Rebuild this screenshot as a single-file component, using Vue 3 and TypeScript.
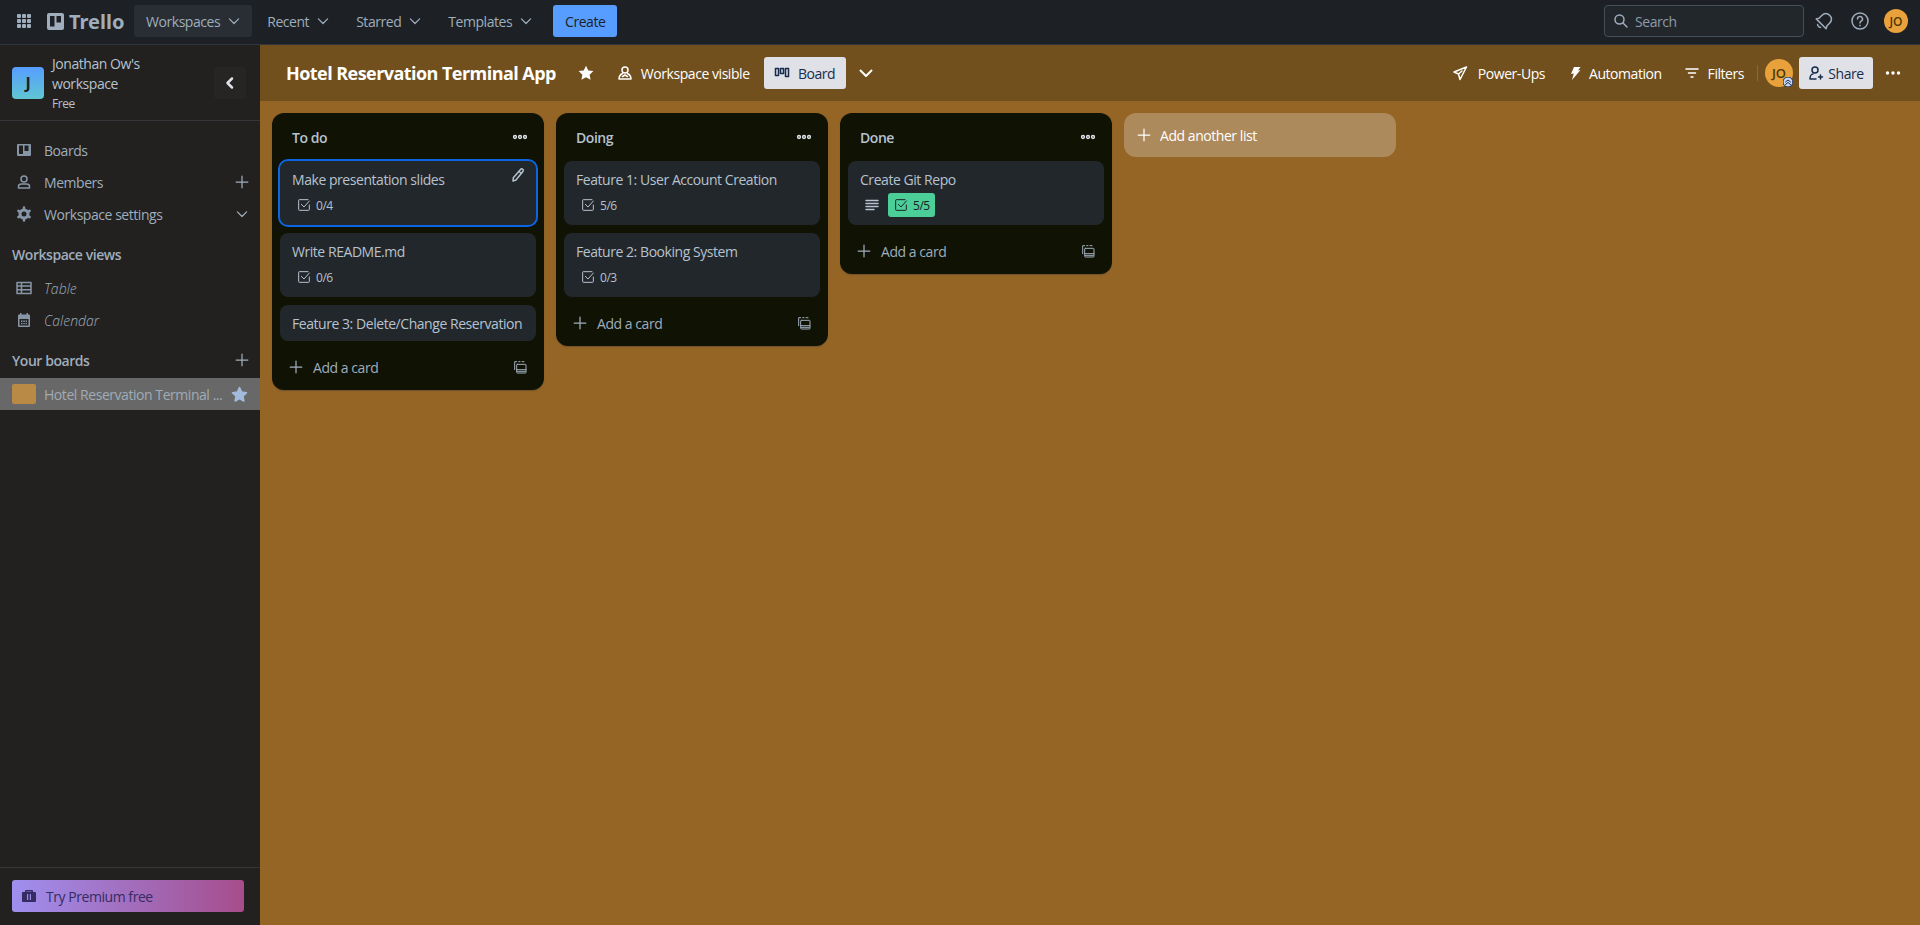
<script setup lang="ts">
const icons: Record<string, string> = {
  chevron: 'M6.5 9.5 12 15l5.5-5.5',
  plus: 'M12 5v14M5 12h14',
  check: 'M20 12v7a1 1 0 0 1-1 1H5a1 1 0 0 1-1-1V5a1 1 0 0 1 1-1h13M8 11l4 4 8-9',
  copy: 'M8 8h12a1 1 0 0 1 1 1v11a1 1 0 0 1-1 1H8a1 1 0 0 1-1-1V9a1 1 0 0 1 1-1ZM7 16h14M8 18.500h12M4 16V4h3M10 4h2M15 4h3',
}

type Card = { title: string; done?: string; desc?: boolean; complete?: boolean; focus?: boolean }
const lists: { name: string; cards: Card[] }[] = [
  {
    name: 'To do',
    cards: [
      { title: 'Make presentation slides', done: '0/4', focus: true },
      { title: 'Write README.md', done: '0/6' },
      { title: 'Feature 3: Delete/Change Reservation' },
    ],
  },
  {
    name: 'Doing',
    cards: [
      { title: 'Feature 1: User Account Creation', done: '5/6' },
      { title: 'Feature 2: Booking System', done: '0/3' },
    ],
  },
  {
    name: 'Done',
    cards: [{ title: 'Create Git Repo', done: '5/5', desc: true, complete: true }],
  },
]
const menus = ['Recent', 'Starred', 'Templates']
</script>

<template>
  <div class="app">
    <header class="topbar">
      <svg class="apps" width="16" height="16" viewBox="0 0 16 16" fill="currentColor">
        <template v-for="y in [1, 6, 11]" :key="y">
          <rect v-for="x in [1, 6, 11]" :key="x" :x="x" :y="y" width="4" height="4" rx="1" />
        </template>
      </svg>
      <div class="logo">
        <svg width="17" height="17" viewBox="0 0 17 17">
          <path fill="currentColor" fill-rule="evenodd" d="M2 0h13a2 2 0 0 1 2 2v13a2 2 0 0 1-2 2H2a2 2 0 0 1-2-2V2a2 2 0 0 1 2-2Zm1 3v10.500h4.500V3Zm6.500 0v6.500H14V3Z" />
        </svg>
        <span>Trello</span>
      </div>
      <button class="menu active">
        Workspaces
        <svg width="20" height="20" viewBox="0 0 24 24"><path :d="icons.chevron" /></svg>
      </button>
      <button v-for="m in menus" :key="m" class="menu">
        {{ m }}
        <svg width="20" height="20" viewBox="0 0 24 24"><path :d="icons.chevron" /></svg>
      </button>
      <button class="create">Create</button>
      <div class="spacer" />
      <div class="search">
        <svg width="16" height="16" viewBox="0 0 16 16"><circle cx="6.500" cy="6.500" r="4.500" /><path d="m10 10 4 4" /></svg>
        <span>Search</span>
      </div>
      <svg class="top-icon bell" width="24" height="24" viewBox="0 0 24 24">
        <g transform="rotate(45 12 12)">
          <path d="M12 4c-3.500 0-5.500 2.500-5.500 6v3.500L5 16h14l-1.500-2.500V10c0-3.500-2-6-5.500-6ZM10 19c.5 1 3.500 1 4 0" />
        </g>
      </svg>
      <svg class="top-icon" width="24" height="24" viewBox="0 0 24 24">
        <circle cx="12" cy="12" r="8" />
        <path d="M9.500 10a2.500 2.500 0 1 1 3.600 2.200c-.8.400-1.100.9-1.100 1.800M12 16.200v.6" />
      </svg>
      <span class="avatar small">JO</span>
    </header>

    <div class="body">
      <aside class="sidebar">
        <div class="ws-head">
          <span class="ws-logo">J</span>
          <div class="ws-name">
            <div>Jonathan Ow's</div>
            <div>workspace</div>
            <div class="free">Free</div>
          </div>
          <button class="collapse">
            <svg width="16" height="16" viewBox="0 0 16 16"><path d="M10 3.500 5.500 8l4.500 4.500" /></svg>
          </button>
        </div>

        <nav class="side-nav">
          <div class="side-row">
            <svg class="side-icon" viewBox="0 0 16 16">
              <path class="fill" fill-rule="evenodd" d="M2 2h12a1 1 0 0 1 1 1v10a1 1 0 0 1-1 1H2a1 1 0 0 1-1-1V3a1 1 0 0 1 1-1Zm1 1.500V12h4V3.500Zm5.500 0V9h4V3.500Z" />
            </svg>
            <span>Boards</span>
          </div>
          <div class="side-row">
            <svg class="side-icon" viewBox="0 0 16 16">
              <circle cx="8" cy="5" r="3" /><path d="M2.500 14v-1.500c0-1.500 1.500-2.500 3-2.500h5c1.500 0 3 1 3 2.500V14Z" />
            </svg>
            <span>Members</span>
            <svg class="row-end" width="20" height="20" viewBox="0 0 24 24"><path :d="icons.plus" /></svg>
          </div>
          <div class="side-row">
            <svg class="side-icon" viewBox="0 0 16 16">
              <circle cx="8" cy="8" r="4" stroke-width="3" />
              <path stroke-width="2.500" d="M8 1.500v2M8 12.500v2M2.400 4.800l1.700 1M11.900 10.200l1.700 1M2.400 11.200l1.700-1M11.900 5.800l1.700-1" />
            </svg>
            <span>Workspace settings</span>
            <svg class="row-end" width="20" height="20" viewBox="0 0 24 24"><path :d="icons.chevron" /></svg>
          </div>
        </nav>

        <div class="side-title views">Workspace views</div>
        <div class="side-row italic first">
          <svg class="side-icon" viewBox="0 0 16 16">
            <path d="M1 2.500h14v11H1ZM1 6h14M1 9.800h14M5.500 2.500v11" />
          </svg>
          <span>Table</span>
        </div>
        <div class="side-row italic">
          <svg class="side-icon" viewBox="0 0 16 16">
            <path class="fill" fill-rule="evenodd" d="M4 1h1.500v1.500h5V1H12v1.500h1a1 1 0 0 1 1 1V14a1 1 0 0 1-1 1H3a1 1 0 0 1-1-1V3.500a1 1 0 0 1 1-1h1Zm-.5 6v6.500h9V7Zm1.500 1.500h1.500V10H5Zm2.300 0h1.500V10H7.300Zm2.300 0H11V10H9.600ZM5 11h1.500v1.300H5Zm2.300 0h1.500v1.300H7.300Zm2.300 0H11v1.300H9.600Z" />
          </svg>
          <span>Calendar</span>
        </div>

        <div class="side-title boards">
          <span>Your boards</span>
          <svg width="20" height="20" viewBox="0 0 24 24"><path :d="icons.plus" /></svg>
        </div>
        <div class="board-row">
          <span class="thumb" />
          <span class="board-name">Hotel Reservation Terminal ...</span>
          <svg class="star" width="17" height="17" viewBox="0 0 16 16">
            <path d="m8 1.500 2 4.200 4.600.6-3.400 3.200.9 4.600L8 11.800 3.900 14.100l.9-4.600L1.400 6.300 6 5.700Z" />
          </svg>
        </div>

        <div class="premium-wrap">
          <button class="premium">
            <svg width="16" height="16" viewBox="0 0 16 16">
              <path fill="currentColor" fill-rule="evenodd" d="M5 2h6a1 1 0 0 1 1 1v1h2a1 1 0 0 1 1 1v8a1 1 0 0 1-1 1H2a1 1 0 0 1-1-1V5a1 1 0 0 1 1-1h2V3a1 1 0 0 1 1-1Zm.5 1.500V4h5v-.5ZM6 6v6h1.200V6Zm2.800 0v6H10V6Z" />
            </svg>
            Try Premium free
          </button>
        </div>
      </aside>

      <main class="board">
        <div class="board-head">
          <h1>Hotel Reservation Terminal App</h1>
          <svg class="white-fill" width="18" height="18" viewBox="0 0 16 16">
            <path d="m8 1.500 2 4.200 4.600.6-3.400 3.200.9 4.600L8 11.800 3.900 14.100l.9-4.600L1.400 6.300 6 5.700Z" />
          </svg>
          <button class="head-btn visible">
            <svg width="16" height="16" viewBox="0 0 16 16">
              <circle cx="8" cy="5" r="3" />
              <path d="M5.500 8.500C3.500 9.500 2 11.500 2 14h12c0-2.500-1.500-4.500-3.500-5.500M5.500 11.500 8 10l2.500 1.500" />
            </svg>
            Workspace visible
          </button>
          <button class="view-btn">
            <svg width="16" height="16" viewBox="0 0 16 16">
              <path d="M1.500 3.500h3v7h-3ZM6.500 3.500h3v5h-3ZM11.500 3.500h3v8h-3Z" />
            </svg>
            Board
          </button>
          <svg class="head-chevron" width="24" height="24" viewBox="0 0 24 24"><path :d="icons.chevron" /></svg>
          <div class="spacer" />
          <button class="head-btn powerups">
            <svg width="16" height="16" viewBox="0 0 16 16">
              <path d="M14.500 2 2 7l4.500 2L8 14.500Z M6.500 9 10 6" />
            </svg>
            Power-Ups
          </button>
          <button class="head-btn auto">
            <svg width="16" height="16" viewBox="0 0 16 16">
              <path class="white" d="M7 2h6.500L11 5.500l2.500-.5L5 15l1.800-6.500L4 9Z" />
            </svg>
            Automation
          </button>
          <button class="head-btn filters">
            <svg width="16" height="16" viewBox="0 0 16 16">
              <path d="M2 4h12M4.500 8h7M7 12h2" />
            </svg>
            Filters
          </button>
          <span class="sep" />
          <span class="avatar member">
            JO
            <svg class="admin" width="10" height="10" viewBox="0 0 10 10">
              <circle cx="5" cy="5" r="5" fill="#c7d7f5" />
              <path d="M2.500 5 5 3l2.500 2M2.500 7.500 5 5.500l2.500 2" />
            </svg>
          </span>
          <button class="share">
            <svg width="16" height="16" viewBox="0 0 16 16">
              <circle cx="7" cy="5" r="3" /><path d="M2 14c0-3 1.500-5 3-5M2 14h6M12.500 10v4M10.500 12h4" />
            </svg>
            Share
          </button>
          <svg class="dots white-fill" width="18" height="18" viewBox="0 0 18 18">
            <circle cx="3.500" cy="9" r="1.700" /><circle cx="9" cy="9" r="1.700" /><circle cx="14.500" cy="9" r="1.700" />
          </svg>
        </div>

        <div class="lists">
          <section v-for="list in lists" :key="list.name" class="list">
            <div class="list-head">
              <h2>{{ list.name }}</h2>
              <svg width="16" height="16" viewBox="0 0 16 16" fill="currentColor">
                <circle cx="3" cy="8" r="1.400" /><circle cx="8" cy="8" r="1.400" /><circle cx="13" cy="8" r="1.400" />
              </svg>
            </div>
            <div class="cards">
              <article v-for="card in list.cards" :key="card.title" class="card" :class="{ focus: card.focus }">
                <div class="card-title">{{ card.title }}</div>
                <svg v-if="card.focus" class="pencil" width="16" height="16" viewBox="0 0 16 16">
                  <path d="M10.500 2.500a1.500 1.500 0 0 1 2.500 1.800L6 13l-3 1 .3-3.200ZM9 4.500l2.500 2" />
                </svg>
                <div v-if="card.done" class="badges">
                  <svg v-if="card.desc" class="desc" width="16" height="16" viewBox="0 0 16 16">
                    <path d="M2 3.500h12M2 6.500h12M2 9.500h12M2 12.500h8" />
                  </svg>
                  <span class="badge" :class="{ complete: card.complete }">
                    <svg width="16" height="16" viewBox="0 0 24 24"><path :d="icons.check" /></svg>
                    {{ card.done }}
                  </span>
                </div>
              </article>
            </div>
            <div class="add-row">
              <svg width="20" height="20" viewBox="0 0 24 24"><path :d="icons.plus" /></svg>
              <span>Add a card</span>
              <svg class="template" width="16" height="16" viewBox="0 0 24 24"><path :d="icons.copy" /></svg>
            </div>
          </section>

          <button class="add-list">
            <svg width="20" height="20" viewBox="0 0 24 24"><path :d="icons.plus" /></svg>
            Add another list
          </button>
        </div>
      </main>
    </div>
  </div>
</template>

<style>
html,
body {
  margin: 0;
  height: 100%;
  overflow: hidden;
}
</style>

<style scoped>
.app {
  width: 1920px;
  height: 925px;
  display: flex;
  flex-direction: column;
  font-family: 'Open Sans', 'Noto Sans', sans-serif;
  font-size: 14px;
  letter-spacing: -0.45px;
  color: #b6c2cf;
  background: #956525;
}

button {
  font: inherit;
  letter-spacing: inherit;
  border: 0;
  background: none;
  color: inherit;
  padding: 0;
}

svg {
  flex: none;
  fill: none;
  stroke: currentColor;
  stroke-width: 1.500;
  stroke-linecap: round;
  stroke-linejoin: round;
}

.spacer {
  flex: 1;
}

/* top nav */
.topbar {
  flex: none;
  height: 45px;
  box-sizing: border-box;
  display: flex;
  align-items: center;
  padding: 0 12px 2px 16px;
  background: #1d2125;
  border-bottom: 1px solid #30363b;
  color: #9fadbc;
}

.apps {
  stroke: none;
  fill: #9fadbc;
}

.logo {
  display: flex;
  align-items: center;
  gap: 5px;
  margin-left: 15px;
  width: 87px;
  font-family: 'Noto Sans', sans-serif;
  font-size: 20px;
  font-weight: 700;
  letter-spacing: 0;
  color: #9fadbc;
}

.logo svg {
  stroke: none;
}

.menu {
  height: 32px;
  display: flex;
  align-items: center;
  gap: 4px;
  padding: 0 8px 0 12px;
  margin-right: 3px;
  border-radius: 3px;
}

.menu.active {
  background: #282e33;
}

.create {
  width: 64px;
  height: 32px;
  margin-left: 6px;
  border-radius: 3px;
  background: #579dff;
  color: #1d2125;
}

.search {
  width: 200px;
  height: 32px;
  box-sizing: border-box;
  display: flex;
  align-items: center;
  gap: 6px;
  padding-left: 8px;
  border: 1px solid #454f59;
  border-radius: 4px;
  background: #22272b;
  color: #8c9bab;
}

.search svg {
  color: #9fadbc;
}

.top-icon {
  margin-left: 12px;
}

.bell {
  margin-left: 8px;
}

.avatar {
  display: flex;
  align-items: center;
  justify-content: center;
  border-radius: 50%;
  background: #e9a23b;
  color: #4a3804;
  font-weight: 600;
  letter-spacing: 0;
}

.avatar.small {
  width: 24px;
  height: 24px;
  margin-left: 12px;
  font-size: 12px;
}

.body {
  flex: 1;
  min-height: 0;
  display: flex;
}

/* sidebar */
.sidebar {
  width: 260px;
  flex: none;
  display: flex;
  flex-direction: column;
  background: #22211f;
  color: #9fadbc;
}

.ws-head {
  height: 76px;
  box-sizing: border-box;
  display: flex;
  align-items: center;
  padding-left: 12px;
  border-bottom: 1px solid #34363a;
}

.ws-logo {
  width: 32px;
  height: 32px;
  flex: none;
  display: flex;
  align-items: center;
  justify-content: center;
  border-radius: 4px;
  background: linear-gradient(#579dff, #60c6d2);
  color: #1d2125;
  font-size: 16px;
  font-weight: 700;
}

.ws-name {
  width: 162px;
  margin: 2px 0 0 8px;
  line-height: 20px;
  color: #b6c2cf;
}

.free {
  font-size: 12px;
  line-height: 20px;
}

.collapse {
  width: 32px;
  height: 32px;
  display: flex;
  align-items: center;
  justify-content: center;
  border-radius: 3px;
  background: #262524;
  color: #dfe1e6;
}

.collapse svg {
  stroke-width: 2.500;
}

.side-nav {
  margin-top: 13px;
}

.side-row {
  height: 32px;
  display: flex;
  align-items: center;
  padding: 0 8px 0 16px;
}

.side-row.first {
  margin-top: 2px;
}

.side-row.italic {
  font-style: italic;
  font-weight: 300;
  letter-spacing: 0;
}

.side-icon {
  width: 16px;
  height: 16px;
  margin-right: 12px;
  color: #8696a7;
}

.fill {
  fill: currentColor;
  stroke: none;
}

.row-end {
  margin-left: auto;
  color: #9fadbc;
}

.side-title {
  display: flex;
  align-items: center;
  height: 32px;
  padding: 0 8px 0 12px;
  font-weight: 600;
}

.views {
  margin-top: 8px;
}

.boards {
  margin-top: 7px;
  height: 34px;
  justify-content: space-between;
}

.board-row {
  height: 32px;
  margin-top: 1px;
  display: flex;
  align-items: center;
  padding: 0 12px;
  background: #686868;
  color: #a0abb6;
}

.thumb {
  width: 24px;
  height: 20px;
  flex: none;
  border-radius: 2px;
  background: #b98a45;
}

.board-name {
  margin-left: 8px;
  flex: 1;
  white-space: nowrap;
  overflow: hidden;
}

.star {
  stroke: #a3bbdb;
  fill: #a3bbdb;
}

.premium-wrap {
  margin-top: auto;
  padding: 12px 16px 12px 12px;
  height: 58px;
  box-sizing: border-box;
  border-top: 1px solid #34363a;
}

.premium {
  width: 100%;
  height: 32px;
  display: flex;
  align-items: center;
  gap: 9px;
  padding-left: 9px;
  border-radius: 3px;
  background: linear-gradient(90deg, #9f8fef, #a64d8c);
  color: #352c63;
}

.premium svg {
  stroke: none;
}

/* board */
.board {
  flex: 1;
  min-width: 0;
  display: flex;
  flex-direction: column;
}

.board-head {
  height: 56px;
  flex: none;
  display: flex;
  align-items: center;
  padding: 0 18px 0 26px;
  background: #72501e;
  color: #fff;
}

.board-head h1 {
  margin: 0 21px 0 0;
  font-size: 18px;
  line-height: 32px;
  font-weight: 700;
  letter-spacing: -0.55px;
}

.white-fill {
  stroke: none;
  fill: #fff;
}

.head-btn {
  display: flex;
  align-items: center;
  height: 32px;
  gap: 8px;
}

.visible {
  margin-left: 22px;
}

.view-btn {
  width: 82px;
  height: 32px;
  margin-left: 14px;
  display: flex;
  align-items: center;
  justify-content: center;
  gap: 8px;
  border-radius: 3px;
  background: #dfe1e6;
  color: #172b4d;
}

.head-chevron {
  margin-left: 8px;
  stroke-width: 2;
}

.powerups {
  gap: 10px;
}

.auto {
  margin-left: 22px;
  gap: 6px;
}

.white {
  fill: #fff;
  stroke: none;
}

.filters {
  margin-left: 22px;
  gap: 8px;
}

.sep {
  width: 1px;
  height: 16px;
  margin-left: 13px;
  background: #8a6a3a;
}

.member {
  position: relative;
  width: 28px;
  height: 28px;
  margin-left: 7px;
  font-size: 13px;
}

.admin {
  position: absolute;
  right: 0;
  bottom: 0;
  stroke: #172b4d;
  stroke-width: 1;
}

.share {
  width: 74px;
  height: 32px;
  margin-left: 6px;
  display: flex;
  align-items: center;
  justify-content: center;
  gap: 4px;
  border-radius: 3px;
  background: #dfe1e6;
  color: #172b4d;
}

.dots {
  margin-left: 11px;
}

.lists {
  flex: 1;
  display: flex;
  align-items: flex-start;
  gap: 12px;
  padding: 12px;
}

.list {
  width: 272px;
  flex: none;
  box-sizing: border-box;
  padding: 0 8px 7px;
  border-radius: 12px;
  background: #101204;
  box-shadow: 0 1px 1px #091e4240;
}

.list-head {
  height: 48px;
  display: flex;
  align-items: center;
  justify-content: space-between;
  padding: 0 8px 0 12px;
  color: #dfe4ea;
}

.list-head h2 {
  margin: 0;
  font-size: 14px;
  font-weight: 600;
  color: #b6c2cf;
}

.cards {
  display: flex;
  flex-direction: column;
  gap: 8px;
}

.card {
  position: relative;
  padding: 9px 12px 7px;
  border-radius: 8px;
  background: #22272b;
}

.card.focus {
  outline: 2px solid #0c66e4;
}

.card-title {
  line-height: 20px;
  white-space: nowrap;
}

.pencil {
  position: absolute;
  top: 6px;
  right: 10px;
}

.badges {
  height: 24px;
  margin: 3px 0 1px;
  display: flex;
  align-items: center;
  gap: 8px;
  font-size: 12px;
  padding-left: 4px;
}

.badge {
  height: 24px;
  display: flex;
  align-items: center;
  gap: 4px;
  padding: 0 4px 0 0;
  border-radius: 3px;
}

.badge.complete {
  padding: 0 5px;
  background: #4bce97;
  color: #1d2125;
}

.desc {
  color: #b6c2cf;
}

.add-row {
  height: 32px;
  margin-top: 10px;
  display: flex;
  align-items: center;
  gap: 7px;
  padding: 0 8px 0 6px;
  color: #9fadbc;
}

.template {
  margin-left: auto;
}

.add-list {
  width: 272px;
  height: 44px;
  flex: none;
  display: flex;
  align-items: center;
  gap: 6px;
  padding-left: 10px;
  border-radius: 12px;
  background: #ad8a5b;
  color: #fff;
}
</style>
